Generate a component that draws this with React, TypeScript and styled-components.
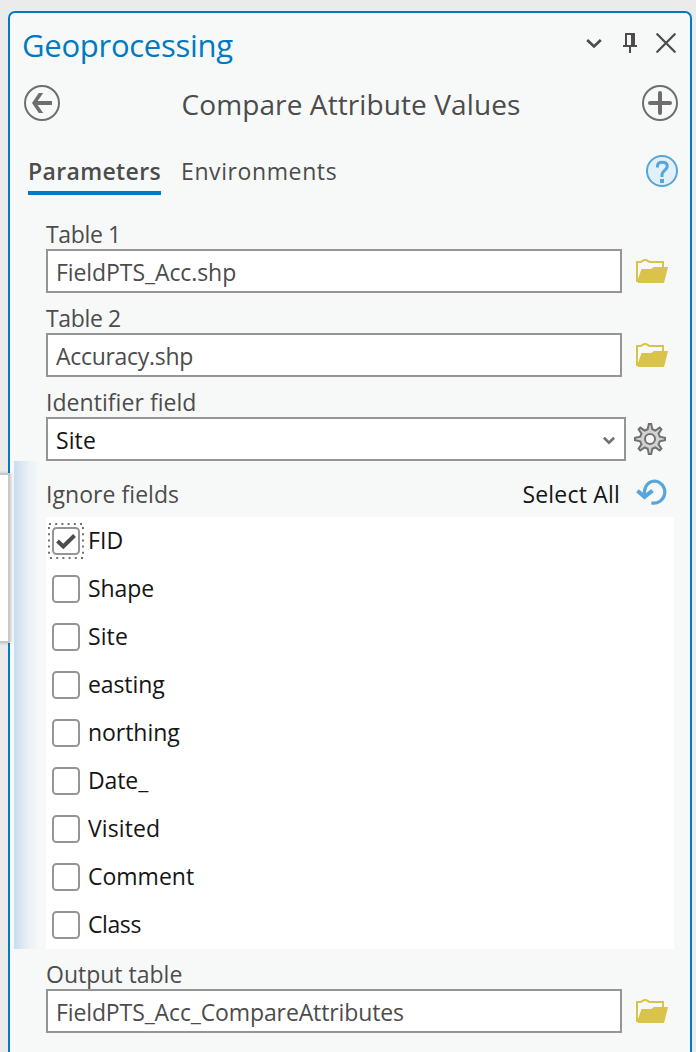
import React, { useState } from 'react';
import styled, { createGlobalStyle } from 'styled-components';

const GlobalStyle = createGlobalStyle`
  *, *::before, *::after { box-sizing: border-box; }
  html, body { margin: 0; background: #ebebeb; overflow: hidden; }
  body { font-family: 'Open Sans', 'Liberation Sans', sans-serif; font-size: 23px; color: #4c4c4c; }
  svg { display: block; flex: none; }
`;

const Screen = styled.div`
  position: relative;
  height: 1052px;
  padding: 11px 4px 0 8px;
  overflow: hidden;
`;
const Panel = styled.main`
  height: 1060px;
  border: 2px solid #007ac2;
  border-radius: 7px;
  background: #f7f9f8;
  display: flex;
  flex-direction: column;
`;
const DockedWindowEdge = styled.div`
  position: absolute;
  left: -10px;
  top: 475px;
  width: 18px;
  height: 166px;
  background: #fff;
  box-shadow: 0 0 0 2px #c8c8c8, 1px 0 3px 2px rgba(0, 0, 0, 0.2);
`;

const Text = styled.span<{ $track?: number }>`
  letter-spacing: ${(p) => p.$track ?? 0}px;
  white-space: nowrap;
`;

const TitleBar = styled.header`
  height: 60px;
  padding: 0 14px 0 12px;
  display: flex;
  align-items: center;
  justify-content: space-between;
`;
const PaneTitle = styled.h1`
  margin: 4px 0 0;
  font-size: 31px;
  font-weight: 400;
  line-height: 40px;
  color: #007ac2;
`;
const WindowButtons = styled.div`
  display: flex;
  align-items: center;
`;
const ToolBar = styled.div`
  height: 60px;
  padding: 0 12px 0 14px;
  display: grid;
  grid-template-columns: 36px 1fr 36px;
  align-items: center;
`;
const ToolTitle = styled.h2`
  margin: 1px 0 0;
  font-size: 28px;
  font-weight: 400;
  line-height: 36px;
  text-align: center;
`;
const TabBar = styled.nav`
  height: 76px;
  padding: 13px 12px 0 18px;
  display: flex;
  align-items: flex-start;
`;
const Tab = styled.div<{ $active?: boolean }>`
  height: 45px;
  margin: 4px 20px 0 0;
  padding-top: 5px;
  width: ${(p) => (p.$active ? '133px' : 'auto')};
  line-height: 32px;
  font-weight: ${(p) => (p.$active ? 600 : 400)};
  border-bottom: 4px solid ${(p) => (p.$active ? '#007ac2' : 'transparent')};
`;
const HelpButton = styled.div`
  margin: 9px 0 0 auto;
`;

const Field = styled.section`
  height: 84px;
  padding-left: 36px;
`;
const Label = styled.label`
  display: block;
  height: 40px;
  padding-top: 10px;
  line-height: 30px;
`;
const Control = styled.div`
  display: flex;
  align-items: center;
`;
const InputBox = styled.div<{ $width?: number; $dark?: boolean }>`
  width: ${(p) => p.$width ?? 576}px;
  height: 44px;
  padding: 2px 9px 0 8px;
  border: 2px solid #959595;
  background: #fff;
  color: ${(p) => (p.$dark ? '#151515' : '#4c4c4c')};
  display: flex;
  align-items: center;
  justify-content: space-between;
`;
const SideIcon = styled.div<{ $gap?: number }>`
  margin-left: ${(p) => p.$gap ?? 14}px;
`;

const IgnoreGroup = styled.section`
  height: 488px;
  margin-left: 4px;
  padding: 0 16px 0 32px;
  background: linear-gradient(to right, #c5dcf0 0, #d6e5f2 6px, #e9f0f5 14px, #f7f9f8 26px) no-repeat;
`;
const GroupHeader = styled.div`
  height: 56px;
  padding: 10px 6px 0 0;
  display: flex;
  align-items: center;
`;
const SelectAll = styled.div`
  margin: 0 16px 0 auto;
  color: #151515;
`;
const ResetButton = styled.div`
  padding-bottom: 4px;
`;
const CheckList = styled.ul`
  margin: 0;
  padding: 0;
  list-style: none;
  background: #fff;
`;
const CheckRow = styled.li`
  height: 48px;
  padding-left: 2px;
  display: flex;
  align-items: center;
  color: #151515;
  line-height: 30px;
`;
const CheckHolder = styled.div`
  width: 36px;
  height: 36px;
  margin-right: 4px;
`;
const CheckLabel = styled(Text)`
  padding-bottom: 2px;
`;

const FolderIcon = () => (
  <svg width="32" height="26" viewBox="0 0 32 26">
    <path d="M1 24V4h3.500C6.500 3.500 6.500 2 9 2s3 1.500 4.500 2H27v6" fill="none" stroke="#d9c34a" strokeWidth="2" />
    <path d="M2 25V21L5.500 11H15l3-2h14l-4 16z" fill="#d9c34a" />
  </svg>
);
const BackIcon = () => (
  <svg width="36" height="36" viewBox="0 0 36 36" fill="none" stroke="#6e6e6e">
    <circle cx="18" cy="18" r="17" strokeWidth="2" />
    <path d="M28 18H11" strokeWidth="4" />
    <path d="M14.800 8H19.200L12.200 18L19.200 28H14.800L8 18z" fill="#6e6e6e" stroke="none" />
  </svg>
);
const AddIcon = () => (
  <svg width="36" height="36" viewBox="0 0 36 36" fill="none" stroke="#6e6e6e" strokeLinecap="round">
    <circle cx="18" cy="18" r="17" strokeWidth="2" />
    <path d="M8 18h20M18 8v20" strokeWidth="4" />
  </svg>
);
const HelpIcon = () => (
  <svg width="32" height="32" viewBox="0 0 32 32" fill="none" stroke="#56a5db">
    <circle cx="16" cy="16" r="15" fill="#e2f0fb" strokeWidth="2" />
    <path d="M11.500 12.500V11c0-2.500 2-3.800 4.800-3.800 3 0 5 1.500 5 4 0 3.500-5.300 4.800-5.300 8.300V22" strokeWidth="3" />
    <path d="M14 24h4v4h-4z" fill="#56a5db" stroke="none" />
  </svg>
);
const ChevronIcon = ({ width, color, weight }: { width: number; color: string; weight: number }) => (
  <svg width={width} height={width} viewBox="0 0 16 16" fill="none" stroke={color} strokeWidth={weight}>
    <path d="M1.200 5L8 11.500L14.800 5" />
  </svg>
);
const PinIcon = () => (
  <svg width="14" height="20" viewBox="0 0 14 20" fill="#4c4c4c">
    <path d="M2 0h10v12h2v2H8v6H6v-6H0v-2h2zM4 2v10h4V2z" fillRule="evenodd" />
  </svg>
);
const CloseIcon = () => (
  <svg width="20" height="20" viewBox="0 0 20 20" stroke="#4c4c4c" strokeWidth="2.300" strokeLinecap="round">
    <path d="M1.300 1.300l17.400 17.400M18.700 1.300L1.300 18.700" />
  </svg>
);
const GearIcon = () => (
  <svg width="32" height="32" viewBox="-16 -16 32 32" stroke="#717171" strokeWidth="2" fill="#d2d2d2">
    <path d="M-1.200-15H1.200L2.300-9.800L5.300-8.500L9.700-11.400L11.400-9.700L8.500-5.300L9.800-2.300L15-1.200V1.200L9.800 2.300L8.500 5.300L11.400 9.700L9.700 11.400L5.300 8.500L2.300 9.800L1.200 15H-1.200L-2.300 9.800L-5.300 8.500L-9.700 11.400L-11.400 9.700L-8.500 5.300L-9.800 2.300L-15 1.200V-1.200L-9.800-2.300L-8.500-5.300L-11.400-9.700L-9.700-11.400L-5.300-8.500L-2.300-9.800z" />
    <circle r="5" fill="#f7f9f8" />
  </svg>
);
const ResetIcon = () => (
  <svg width="32" height="28" viewBox="0 0 32 28" fill="none" stroke="#56a5db">
    <path d="M8.500 18V14C8.500 8 13 3 18.800 3a11.100 11.100 0 1 1-3.400 21.900" strokeWidth="3.200" />
    <path d="M1.500 12.700L8.500 18.800L16.500 12.700" strokeWidth="4" />
  </svg>
);
const CheckIcon = ({ checked, focused }: { checked: boolean; focused: boolean }) => (
  <svg width="36" height="36" viewBox="0 0 36 36" fill="none">
    {focused && (
      <path
        d="M1 1H34M2 35H35M1 4V33M35 4V33"
        stroke="#717171"
        strokeWidth="2"
        strokeDasharray="2 4.200"
      />
    )}
    <rect x="5" y="5" width="26" height="26" rx="3.500" fill="#fff" stroke="#959595" strokeWidth="2" />
    {checked && <path d="M9.500 18L15.300 23.500L26.500 12.500" stroke="#4c4c4c" strokeWidth="4" />}
  </svg>
);

const fields: { name: string; track: number }[] = [
  { name: 'FID', track: 0.1 },
  { name: 'Shape', track: -0.1 },
  { name: 'Site', track: 0.1 },
  { name: 'easting', track: -0.1 },
  { name: 'northing', track: -0.05 },
  { name: 'Date_', track: -0.1 },
  { name: 'Visited', track: 0.1 },
  { name: 'Comment', track: 0 },
  { name: 'Class', track: -0.4 },
];

function FileField({ label, value, labelTrack, track }: { label: string; value: string; labelTrack?: number; track?: number }) {
  return (
    <Field>
      <Label><Text $track={labelTrack}>{label}</Text></Label>
      <Control>
        <InputBox><Text $track={track}>{value}</Text></InputBox>
        <SideIcon><FolderIcon /></SideIcon>
      </Control>
    </Field>
  );
}

export default function App() {
  const [ignored, setIgnored] = useState<string[]>(['FID']);
  const toggle = (name: string) =>
    setIgnored((list) => (list.includes(name) ? list.filter((n) => n !== name) : [...list, name]));

  return (
    <Screen>
      <GlobalStyle />
      <Panel>
        <TitleBar>
          <PaneTitle><Text $track={-0.27}>Geoprocessing</Text></PaneTitle>
          <WindowButtons>
            <ChevronIcon width={16} color="#4c4c4c" weight={2.7} />
            <SideIcon $gap={21}><PinIcon /></SideIcon>
            <SideIcon $gap={19}><CloseIcon /></SideIcon>
          </WindowButtons>
        </TitleBar>
        <ToolBar>
          <BackIcon />
          <ToolTitle><Text $track={0.1}>Compare Attribute Values</Text></ToolTitle>
          <AddIcon />
        </ToolBar>
        <TabBar>
          <Tab $active><Text $track={0.36}>Parameters</Text></Tab>
          <Tab><Text $track={0.6}>Environments</Text></Tab>
          <HelpButton><HelpIcon /></HelpButton>
        </TabBar>
        <FileField label="Table 1" value="FieldPTS_Acc.shp" labelTrack={-0.35} track={-0.08} />
        <FileField label="Table 2" value="Accuracy.shp" labelTrack={-0.35} track={-0.3} />
        <Field>
          <Label><Text $track={0.05}>Identifier field</Text></Label>
          <Control>
            <InputBox $width={580} $dark>
              <Text $track={0.1}>Site</Text>
              <ChevronIcon width={12} color="#717171" weight={3.5} />
            </InputBox>
            <SideIcon $gap={8}><GearIcon /></SideIcon>
          </Control>
        </Field>
        <IgnoreGroup>
          <GroupHeader>
            <Text $track={0.05}>Ignore fields</Text>
            <SelectAll><Text $track={0.2}>Select All</Text></SelectAll>
            <ResetButton><ResetIcon /></ResetButton>
          </GroupHeader>
          <CheckList>
            {fields.map((f) => (
              <CheckRow key={f.name} onClick={() => toggle(f.name)}>
                <CheckHolder><CheckIcon checked={ignored.includes(f.name)} focused={f.name === 'FID'} /></CheckHolder>
                <CheckLabel $track={f.track}>{f.name}</CheckLabel>
              </CheckRow>
            ))}
          </CheckList>
        </IgnoreGroup>
        <FileField label="Output table" value="FieldPTS_Acc_CompareAttributes" track={-0.12} />
      </Panel>
      <DockedWindowEdge />
    </Screen>
  );
}
